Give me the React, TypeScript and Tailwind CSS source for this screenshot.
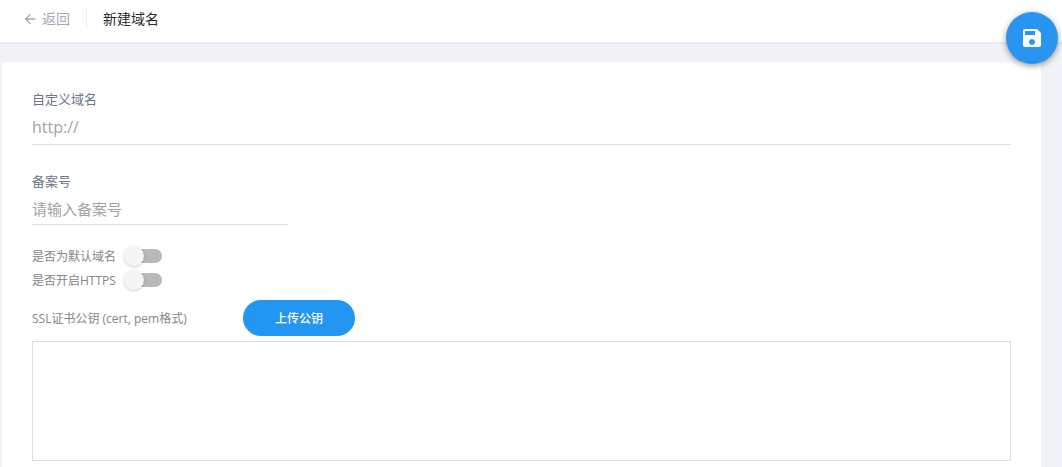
import React, { useState } from 'react';
import { MdArrowBack, MdSave } from 'react-icons/md';

interface SwitchRowProps {
  id: string;
  label: string;
  checked: boolean;
  onChange: (checked: boolean) => void;
}

function SwitchRow({ id, label, checked, onChange }: SwitchRowProps) {
  return (
    <div className="flex h-6 items-center">
      <label htmlFor={id} className="pt-0.5 text-xs text-[#868686]">{label}</label>
      <input
        id={id}
        type="checkbox"
        role="switch"
        checked={checked}
        onChange={(e) => onChange(e.target.checked)}
        className="relative ml-2.5 h-3.5 w-9 cursor-pointer appearance-none rounded-full bg-[#b9b9b9] transition-colors before:absolute before:-top-[3px] before:-left-0.5 before:size-5 before:rounded-full before:bg-[#f5f5f5] before:shadow-[0_1px_3px_rgba(0,0,0,0.2)] before:transition-transform checked:bg-[#90caf9] checked:before:translate-x-5 checked:before:bg-[#2196f3]"
      />
    </div>
  );
}

export default function App() {
  const [domain, setDomain] = useState('');
  const [record, setRecord] = useState('');
  const [isDefault, setIsDefault] = useState(false);
  const [https, setHttps] = useState(false);
  const [cert, setCert] = useState('');

  return (
    <div className="flex min-h-screen flex-col bg-[#f2f3f8] font-['Open_Sans','Noto_Sans_CJK_SC',sans-serif]">
      <header className="flex h-[42px] items-center bg-white pb-1 pl-[22px] text-sm shadow-[0_1px_2px_rgba(0,0,0,0.06)]">
        <a href="#" className="flex items-center gap-1 text-[#a4a6b8]">
          <MdArrowBack size={16} />
          返回
        </a>
        <span className="mx-4 h-5 w-px bg-[#ebedf2]" />
        <h1 className="text-[#282a2e]">新建域名</h1>
      </header>

      <button
        type="button"
        aria-label="保存"
        className="fixed top-3 right-1 flex size-[52px] items-center justify-center rounded-full bg-[#2a95f0] text-white shadow-[0_2px_6px_rgba(0,0,0,0.4)]"
      >
        <MdSave size={24} />
      </button>

      <main className="mt-5 mr-[21px] ml-0.5 flex-1 rounded-t bg-white px-[30px] pt-[27px] pb-1.5">
        <div className="flex flex-col">
          <label htmlFor="domain" className="text-[13px] leading-5 text-[#6c7589]">自定义域名</label>
          <input
            id="domain"
            type="text"
            placeholder="http://"
            value={domain}
            onChange={(e) => setDomain(e.target.value)}
            className="mt-1 h-8 w-full border-b border-[#dedede] pb-1 text-base text-[#444] outline-none placeholder:text-[#a3a3a3]"
          />
        </div>

        <div className="mt-[26px] flex flex-col">
          <label htmlFor="record" className="text-[13px] leading-5 text-[#6c7589]">备案号</label>
          <input
            id="record"
            type="text"
            placeholder="请输入备案号"
            value={record}
            onChange={(e) => setRecord(e.target.value)}
            className="mt-0.5 h-8 w-64 border-b border-[#dedede] text-[15px] text-[#444] outline-none placeholder:text-[#a3a3a3]"
          />
        </div>

        <div className="mt-[19px]">
          <SwitchRow id="is-default" label="是否为默认域名" checked={isDefault} onChange={setIsDefault} />
          <SwitchRow id="https" label="是否开启HTTPS" checked={https} onChange={setHttps} />
        </div>

        <div className="mt-2 flex items-center">
          <label htmlFor="cert" className="w-[211px] pt-0.5 text-xs text-[#868686]">SSL证书公钥 (cert, pem格式)</label>
          <button type="button" className="h-9 rounded-full bg-[#2196f3] px-8 pt-0.5 text-xs font-medium text-white">
            上传公钥
          </button>
        </div>
        <textarea
          id="cert"
          value={cert}
          onChange={(e) => setCert(e.target.value)}
          className="mt-[5px] block h-[120px] w-full resize-none border border-[#dedede] p-2 text-xs text-[#444] outline-none"
        />
      </main>
    </div>
  );
}
